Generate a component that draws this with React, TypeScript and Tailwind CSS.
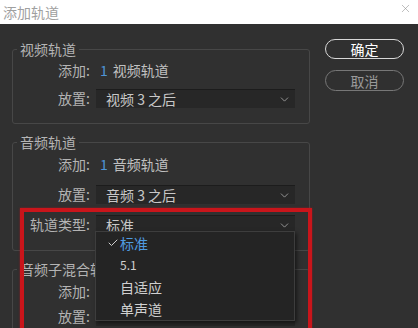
import { Check, ChevronDown, X } from "lucide-react";

const font = { fontFamily: '"Noto Sans CJK SC", "Noto Sans", sans-serif' };

function Label({ children }: { children: React.ReactNode }) {
  return (
    <span className="w-[77px] shrink-0 text-right text-[14px] text-[#b4b4b4]">
      {children}
    </span>
  );
}

function Select({ value }: { value: string }) {
  return (
    <div className="ml-[6px] flex h-[19px] w-[199px] items-center justify-between border-t border-[#1c1c1c] bg-[#272727] pl-[10px] pr-[4px] text-[14px] text-[#c8c8c8]">
      <span>{value}</span>
      <ChevronDown size={13} strokeWidth={1.5} className="text-[#aaa]" />
    </div>
  );
}

function Group({
  title,
  children,
  className,
}: {
  title: string;
  children: React.ReactNode;
  className?: string;
}) {
  return (
    <fieldset
      className={`rounded-[3px] border border-[#474747] pl-0 pr-0 ${className ?? ""}`}
    >
      <legend className="ml-[4px] h-[20px] px-[3px] text-[14px] leading-[20px] text-[#b4b4b4]">
        {title}
      </legend>
      {children}
    </fieldset>
  );
}

export default function App() {
  return (
    <div style={font} className="relative h-[328px] w-[418px] overflow-hidden bg-[#303030]">
      <div className="flex h-[24px] items-center justify-between bg-white pl-[3px] pr-[6px]">
        <span className="text-[14px] text-[#a0a0a0]">添加轨道</span>
        <X size={13} strokeWidth={1} className="mb-[8px] text-[#888]" />
      </div>

      <div className="flex">
        <div className="ml-[12px] w-[298px] pt-[15px]">
          <Group title="视频轨道" className="pb-[14px]">
            <div className="flex h-[22px] items-center">
              <Label>添加:</Label>
              <span className="ml-[10px] text-[14px] text-[#4f94d4]">1</span>
              <span className="ml-[5px] text-[14px] text-[#c0c0c0]">视频轨道</span>
            </div>
            <div className="mt-[7px] flex items-center">
              <Label>放置:</Label>
              <Select value="视频 3 之后" />
            </div>
          </Group>

          <Group title="音频轨道" className="mt-[8px] pb-[15px]">
            <div className="flex h-[24px] items-center">
              <Label>添加:</Label>
              <span className="ml-[10px] text-[14px] text-[#4f94d4]">1</span>
              <span className="ml-[5px] text-[14px] text-[#c0c0c0]">音频轨道</span>
            </div>
            <div className="mt-[8px] flex items-center">
              <Label>放置:</Label>
              <Select value="音频 3 之后" />
            </div>
            <div className="mt-[9px] flex items-center">
              <Label>轨道类型:</Label>
              <Select value="标准" />
            </div>
          </Group>

          <Group title="音频子混合轨道" className="mt-[8px] pb-[15px]">
            <div className="flex h-[24px] items-center">
              <Label>添加:</Label>
            </div>
            <div className="mt-[3px] flex items-center">
              <Label>放置:</Label>
              <Select value="" />
            </div>
          </Group>
        </div>

        <div className="ml-[15px] flex flex-col gap-[11px] pt-[15px]">
          <button className="h-[20px] w-[79px] rounded-full border border-[#d8d8d8] text-[14px] leading-none text-white">
            确定
          </button>
          <button className="h-[21px] w-[79px] rounded-full border border-[#777] text-[14px] leading-none text-[#9a9a9a]">
            取消
          </button>
        </div>
      </div>

      <div className="absolute left-[95px] top-[231px] w-[200px] border border-[#3d3d3d] bg-[#242424] shadow-[2px_2px_4px_rgba(0,0,0,0.5)]">
        {[
          { t: "标准", on: true },
          { t: "5.1", on: false },
          { t: "自适应", on: false },
          { t: "单声道", on: false },
        ].map((item) => (
          <div key={item.t} className="flex h-[22px] items-center">
            <span className="flex w-[23px] justify-end">
              {item.on && <Check size={12} strokeWidth={2} className="text-[#d0d0d0]" />}
            </span>
            <span
              className={`ml-[1px] ${item.t === "5.1" ? "text-[12px]" : "text-[14px]"} ${
                item.on ? "text-[#4f9be0]" : "text-[#d0d0d0]"
              }`}
            >
              {item.t}
            </span>
          </div>
        ))}
      </div>

      <div className="absolute left-[20px] top-[208px] h-[140px] w-[292px] border-[4px] border-[#c9151b] shadow-[0_0_2px_rgba(200,20,27,0.6)]" />
    </div>
  );
}
